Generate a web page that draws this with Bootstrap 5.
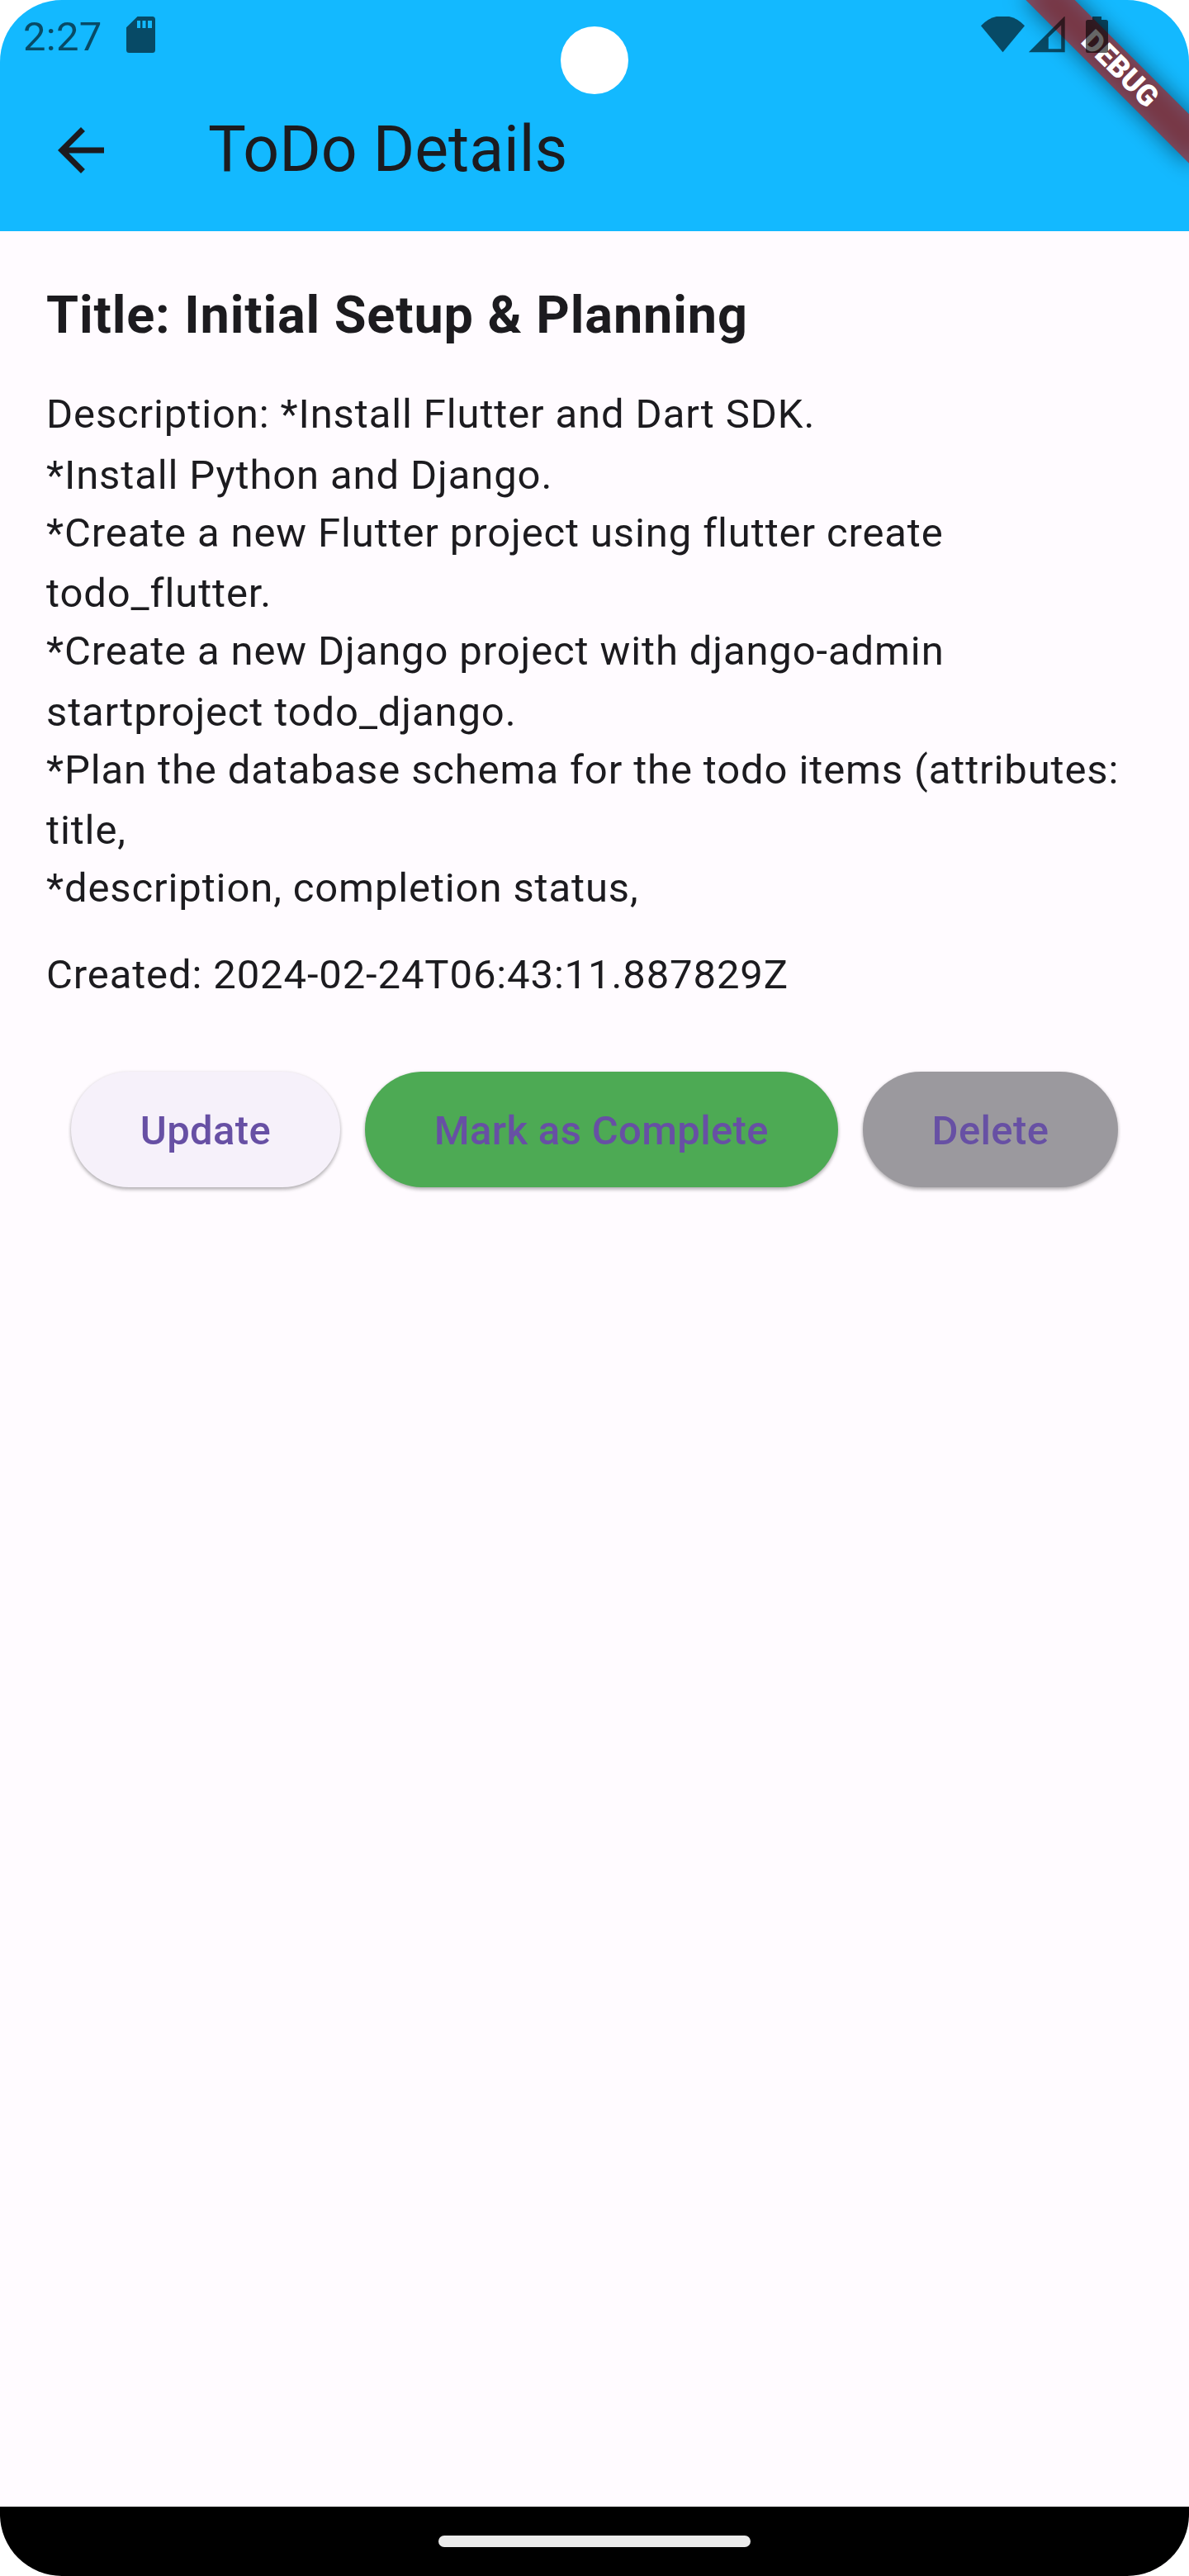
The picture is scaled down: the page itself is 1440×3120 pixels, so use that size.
<!DOCTYPE html>
<html lang="en">
<head>
<meta charset="utf-8">
<meta name="viewport" content="width=device-width, initial-scale=1">
<title>ToDo Details</title>
<link href="https://cdn.jsdelivr.net/npm/bootstrap@5.3.0/dist/css/bootstrap.min.css" rel="stylesheet">
<style>
  body { background: #fff; font-family: Roboto, "Liberation Sans", sans-serif; color: #1c1b1f; }
  .phone { width: 1440px; height: 3120px; border-radius: 75px; background: #fffbff; }
  .app-header { height: 280px; background: #13b9ff; }
  .status-bar { height: 84px; padding: 0 98px 0 28px; z-index: 3; color: rgba(0,0,0,.6); }
  .status-bar svg { fill: currentColor; display: block; }
  .clock { font-size: 49px; line-height: 83px; padding-top: 5px; letter-spacing: .3px; }
  .icon-sd { margin-left: 29px; }
  .icon-battery { margin-left: 25px; }
  .title-bar { height: 196px; padding: 0 56px; gap: 112px; }
  .screen-title { font-size: 77px; line-height: 98px; font-weight: 400; padding-bottom: 2px; }
  .camera { width: 82px; height: 82px; left: 679px; top: 32px; z-index: 4; }
  .ribbon-area { width: 300px; height: 300px; right: 0; top: 0; z-index: 2; }
  .ribbon, .ribbon-shade { width: 280px; height: 42px; left: 75.9px; top: 63.1px; transform: rotate(45deg); }
  .ribbon { background: rgba(183,28,28,.627); color: #fff; font-size: 35.7px; line-height: 41px; font-weight: 900; }
  .ribbon-shade { background: rgba(0,0,0,.5); filter: blur(13.9px); }
  .details { padding: 56px; }
  .todo-title { font-size: 63px; line-height: 91px; font-weight: 700; letter-spacing: .875px; margin: 0 0 40px; }
  .todo-text { font-size: 49px; line-height: 69px; letter-spacing: .875px; }
  .todo-text span { display: block; white-space: nowrap; }
  .todo-text span + span { padding-top: 1px; }
  .todo-text span.rise { padding-top: 5px; }
  .todo-text span.rise-sm { padding-top: 4px; }
  .created { margin-top: 36px; }
  .actions { margin-top: 83px; }
  .actions .btn { height: 140px; padding: 3px 84px 0; border: 0; font-size: 49px; line-height: 69px; font-weight: 500; letter-spacing: .35px; color: #6750a4; box-shadow: 0 3px 4px rgba(0,0,0,.22), 0 1px 4px rgba(0,0,0,.14); }
  .btn-update { background: #f6f1fa; }
  .btn-complete { background: #4daa54; }
  .btn-delete { background: #9b999e; }
  .nav-strip { height: 84px; }
  .home-pill { width: 378px; height: 14px; background: #ebebeb; }
</style>
</head>
<body>
<div class="phone position-relative overflow-hidden d-flex flex-column">
  <header class="app-header">
    <div class="status-bar position-relative d-flex justify-content-between">
      <div class="d-flex align-items-center">
        <span class="clock">2:27</span>
        <svg class="icon-sd" width="35" height="44" viewBox="0 0 35 44"><path fill-rule="evenodd" d="M13.500 0H31.500q3.500 0 3.500 3.500v37q0 3.500-3.500 3.500H3.500q-3.500 0-3.500-3.500V13.300zM13 5v9h4V5zm6.500 0v9h4V5zm6.500 0v9h5V5z"/></svg>
      </div>
      <div class="d-flex align-items-center">
        <svg width="53" height="44" viewBox="0 0 53 44"><path d="M0 11.300Q11-.8 26.500-.8T53 11.300L26.500 43.300z"/></svg>
        <svg class="ms-1" width="45" height="44" viewBox="0 0 45 44"><path fill-rule="evenodd" d="M.8 43.300L44.700-.7v44zM24.800 25.300v13.900H40.200V10.500z"/></svg>
        <svg class="icon-battery" width="27" height="44" viewBox="0 0 27 44"><path d="M8 0h11v4h5.500q2.500 0 2.500 2.500v35q0 2.500-2.500 2.500H2.500q-2.500 0-2.500-2.500V6.500q0-2.500 2.500-2.500H8z"/></svg>
      </div>
    </div>
    <div class="title-bar d-flex align-items-center">
      <svg width="84" height="84" viewBox="0 0 24 24" fill="#1c1b1f"><path d="M20 11H7.830l5.590-5.590L12 4l-8 8 8 8 1.410-1.410L7.830 13H20z"/></svg>
      <h1 class="screen-title mb-0">ToDo Details</h1>
    </div>
    <div class="camera position-absolute rounded-circle bg-white"></div>
    <div class="ribbon-area position-absolute overflow-hidden">
      <div class="ribbon-shade position-absolute"></div>
      <div class="ribbon position-absolute text-center">DEBUG</div>
    </div>
  </header>
  <main class="details flex-grow-1">
    <h2 class="todo-title">Title: Initial Setup &amp; Planning</h2>
    <div class="todo-text">
      <span>Description: *Install Flutter and Dart SDK.</span>
      <span class="rise">*Install Python and Django.</span>
      <span>*Create a new Flutter project using flutter create</span>
      <span class="rise-sm">todo_flutter.</span>
      <span>*Create a new Django project with django-admin</span>
      <span class="rise">startproject todo_django.</span>
      <span>*Plan the database schema for the todo items (attributes:</span>
      <span class="rise-sm">title,</span>
      <span>*description, completion status,</span>
    </div>
    <div class="todo-text created">Created: 2024-02-24T06:43:11.887829Z</div>
    <div class="actions d-flex justify-content-evenly">
      <button class="btn rounded-pill btn-update">Update</button>
      <button class="btn rounded-pill btn-complete">Mark as Complete</button>
      <button class="btn rounded-pill btn-delete">Delete</button>
    </div>
  </main>
  <footer class="nav-strip bg-black d-flex align-items-center justify-content-center">
    <div class="home-pill rounded-pill"></div>
  </footer>
</div>
<script src="https://cdn.jsdelivr.net/npm/bootstrap@5.3.0/dist/js/bootstrap.bundle.min.js"></script>
</body>
</html>
